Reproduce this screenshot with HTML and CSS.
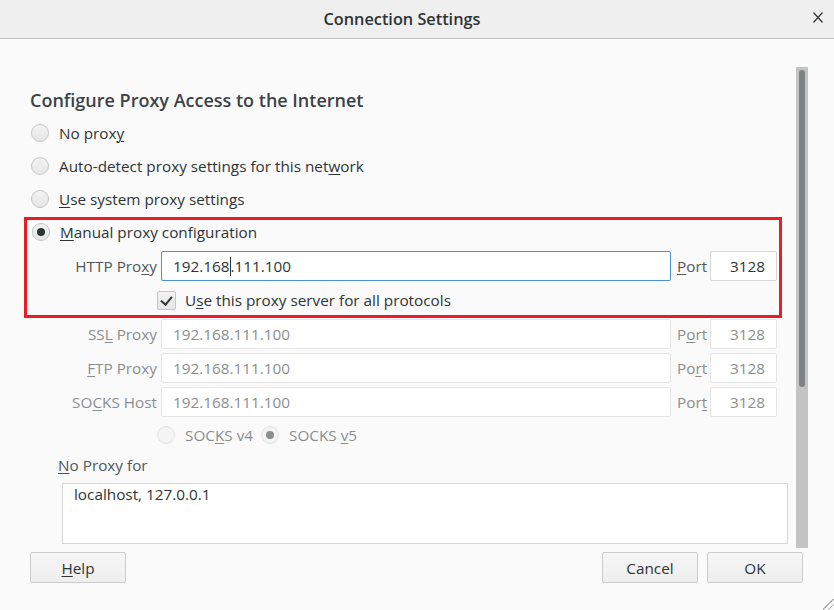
FILE: index.html
```html
<!doctype html>
<html lang="en">
<head>
    <meta charset="UTF-8">
    <meta name="viewport" content="width=device-width, initial-scale=1.0">
    <title>Connection Settings</title>
    <link rel="stylesheet" href="styles.css">
</head>
<body>
    <div class="titlebar">
        <span class="title">Connection Settings</span>
        <svg class="close" width="10" height="11" viewBox="0 0 10 11">
            <path d="M0.5 0.5 L9.5 10.5 M9.5 0.5 L0.5 10.5" stroke="#2e3436" stroke-width="1.2" fill="none"/>
        </svg>
    </div>
    <div class="dialog">
        <div class="content">
            <h1>Configure Proxy Access to the Internet</h1>
            <div class="radio-row"><span class="radio"></span><span>No prox<u>y</u></span></div>
            <div class="radio-row"><span class="radio"></span><span>Auto-detect proxy settings for this net<u>w</u>ork</span></div>
            <div class="radio-row"><span class="radio"></span><span><u>U</u>se system proxy settings</span></div>

            <div class="highlight">
                <div class="radio-row manual"><span class="radio checked"></span><span><u>M</u>anual proxy configuration</span></div>
                <div class="proxy-grid">
                    <label class="field-label">HTTP Pro<u>x</u>y</label>
                    <div class="input focused">192.168<span class="caret"></span>.111.100</div>
                    <label class="port-label"><u>P</u>ort</label>
                    <div class="input port">3128</div>
                </div>
                <div class="check-row"><span class="checkbox"></span><span>U<u>s</u>e this proxy server for all protocols</span></div>
            </div>

            <div class="proxy-grid disabled">
                <label class="field-label">SS<u>L</u> Proxy</label>
                <div class="input">192.168.111.100</div>
                <label class="port-label">P<u>o</u>rt</label>
                <div class="input port">3128</div>

                <label class="field-label"><u>F</u>TP Proxy</label>
                <div class="input">192.168.111.100</div>
                <label class="port-label">Po<u>r</u>t</label>
                <div class="input port">3128</div>

                <label class="field-label">SO<u>C</u>KS Host</label>
                <div class="input">192.168.111.100</div>
                <label class="port-label">Por<u>t</u></label>
                <div class="input port">3128</div>
            </div>

            <div class="socks-row disabled">
                <span class="radio-inline"><span class="radio"></span><span>SOC<u>K</u>S v4</span></span>
                <span class="radio-inline"><span class="radio checked"></span><span>SOCKS <u>v</u>5</span></span>
            </div>

            <div class="no-proxy-label"><u>N</u>o Proxy for</div>
            <div class="textarea">localhost, 127.0.0.1</div>
        </div>
        <div class="scrollbar"><div class="thumb"></div></div>
        <div class="buttons">
            <button type="button"><u>H</u>elp</button>
            <div class="spacer"></div>
            <button type="button">Cancel</button>
            <button type="button">OK</button>
        </div>
        <div class="grip"></div>
    </div>
</body>
</html>
```

FILE: styles.css
```css
html, body {
    margin: 0;
    height: 100%;
}
body {
    font-family: "Open Sans", "Noto Sans", sans-serif;
    font-size: 15.3px;
    color: #2e3436;
    background: #fafafa;
    overflow: hidden;
}
u {
    text-decoration-thickness: 1px;
    text-underline-offset: 2px;
}
.titlebar {
    height: 38px;
    border-bottom: 1px solid #c2c2c2;
    background: #efefef;
    display: flex;
    align-items: center;
    justify-content: center;
    position: relative;
}
.title {
    font-weight: 600;
    font-size: 16.3px;
    color: #2e3436;
    margin-left: -30px;
}
.close {
    position: absolute;
    left: 813px;
    top: 12px;
}
.dialog {
    position: relative;
    height: 571px;
}
.content {
    padding: 50px 0 0 30px;
    width: 758px;
}
h1 {
    margin: 0 0 5px;
    font-size: 18px;
    font-weight: 600;
    line-height: 22px;
    color: #3b4348;
}
.radio-row {
    height: 33px;
    display: flex;
    align-items: center;
    padding-left: 1px;
}
.radio {
    box-sizing: border-box;
    width: 18px;
    height: 18px;
    border: 1px solid #c6c6c6;
    border-radius: 50%;
    background: linear-gradient(#f2f2f2, #e6e6e6);
    margin-right: 10px;
    display: flex;
    align-items: center;
    justify-content: center;
    flex-shrink: 0;
}
.radio.checked::after {
    content: "";
    width: 8px;
    height: 8px;
    border-radius: 50%;
    background: #2e3436;
}
.highlight {
    border: 3px solid #ed1c24;
    margin: 2px 0 0 -6px;
    width: 748px;
    padding: 0 0 5px 4px;
}
.radio-row.manual {
    height: 24px;
}
.proxy-grid {
    display: grid;
    grid-template-columns: 98px 510px 31px 67px;
    grid-auto-rows: 30px;
    row-gap: 4px;
    column-gap: 4px;
    padding-left: 28px;
}
.highlight .proxy-grid {
    margin-top: 7px;
}
.proxy-grid.disabled {
    margin-top: 1px;
    padding-left: 29px;
}
.field-label {
    text-align: right;
    align-self: center;
    white-space: nowrap;
    color: #50575b;
}
.port-label {
    align-self: center;
    padding-left: 2px;
    white-space: nowrap;
    color: #50575b;
}
.input {
    box-sizing: border-box;
    border: 1px solid #d6d6d6;
    border-radius: 2px;
    background: #fff;
    padding: 0 11px;
    display: flex;
    align-items: center;
    white-space: nowrap;
    color: #2e3436;
}
.input.focused {
    border-color: #4a90d9;
}
.input.port {
    justify-content: flex-end;
}
.caret {
    display: inline-block;
    width: 1px;
    height: 19px;
    background: #2e3436;
}
.disabled .input {
    border-color: #e6e6e6;
    color: #8b8e8f;
}
.disabled .field-label,
.disabled .port-label,
.socks-row.disabled {
    color: #8b8e8f;
}
.check-row {
    display: flex;
    align-items: center;
    height: 20px;
    margin-top: 9px;
    padding-left: 126px;
}
.checkbox {
    box-sizing: border-box;
    width: 19px;
    height: 19px;
    border: 1px solid #c6c6c6;
    border-radius: 2px;
    background: linear-gradient(#f2f2f2, #e6e6e6);
    margin-right: 9px;
    position: relative;
    flex-shrink: 0;
}
.checkbox::after {
    content: "";
    position: absolute;
    left: 5px;
    top: 2px;
    width: 5px;
    height: 9px;
    border: solid #2e3436;
    border-width: 0 2px 2px 0;
    transform: rotate(40deg);
}
.socks-row {
    display: flex;
    align-items: center;
    gap: 8px;
    height: 20px;
    margin-top: 8px;
    padding-left: 127px;
}
.radio-inline {
    display: flex;
    align-items: center;
}
.socks-row .radio {
    border-color: #e2e2e2;
    background: #f4f4f4;
}
.socks-row .radio.checked::after {
    background: #8b8e8f;
}
.no-proxy-label {
    margin: 10px 0 0 28px;
    height: 20px;
    line-height: 20px;
    color: #50575b;
}
.textarea {
    box-sizing: border-box;
    margin: 8px 0 0 32px;
    width: 726px;
    height: 61px;
    border: 1px solid #d6d6d6;
    background: #fff;
    padding: 0 11px;
}
.scrollbar {
    position: absolute;
    left: 796px;
    top: 28px;
    width: 12px;
    height: 481px;
    background: #c3c4c3;
}
.thumb {
    margin: 3px auto 0;
    width: 6px;
    height: 317px;
    border-radius: 3px;
    background: #7e8282;
}
.buttons {
    display: flex;
    gap: 9px;
    padding: 8px 31px 0 30px;
}
.spacer {
    flex: 1;
}
button {
    box-sizing: border-box;
    width: 96px;
    height: 31px;
    border: 1px solid #cdcdcd;
    border-radius: 2px;
    background: linear-gradient(#f6f6f6, #eeeeee);
    font: inherit;
    color: #2e3436;
}
.grip {
    position: absolute;
    right: 0;
    bottom: 0;
    width: 11px;
    height: 11px;
    background: linear-gradient(135deg, transparent 45%, #b0b0b0 45%, #b0b0b0 52%, transparent 52%, transparent 70%, #b0b0b0 70%, #b0b0b0 77%, transparent 77%);
}
```
